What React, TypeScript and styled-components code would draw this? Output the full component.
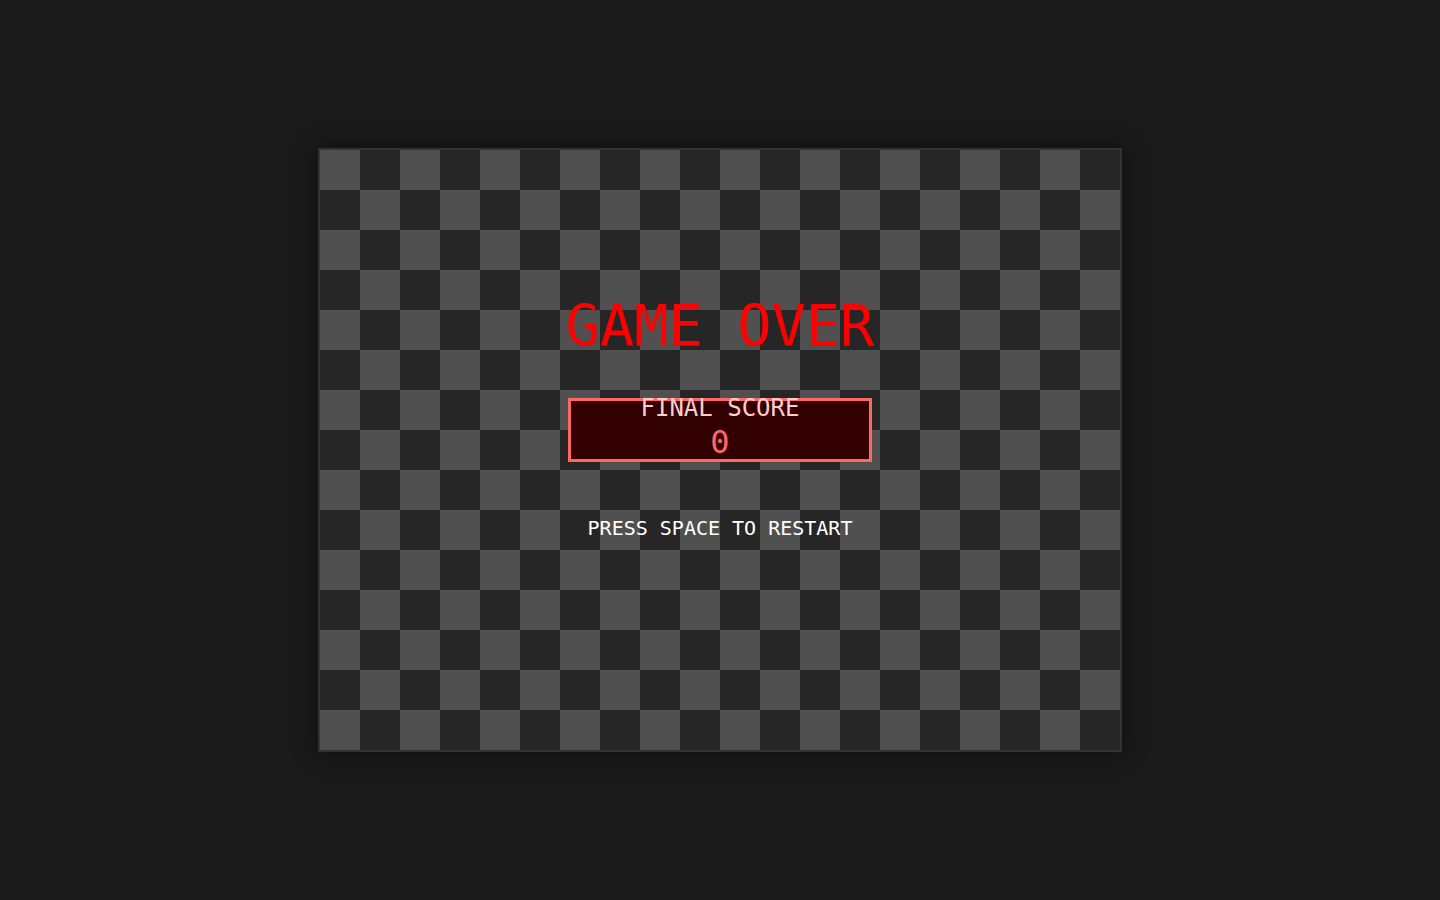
import React from 'react';
import styled, { createGlobalStyle } from 'styled-components';

const GlobalStyle = createGlobalStyle`
  html, body {
    margin: 0;
    padding: 0;
    background: #1a1a1a;
  }
  * {
    box-sizing: border-box;
  }
`;

const Page = styled.div`
  width: 100%;
  min-height: 100vh;
  display: flex;
  align-items: center;
  justify-content: center;
  font-family: 'DejaVu Sans Mono', 'Liberation Mono', monospace;
`;

const Board = styled.div`
  width: 804px;
  height: 604px;
  border: 2px solid #333333;
  box-shadow: 0 0 20px rgba(0, 0, 0, 0.5);
  background: repeating-conic-gradient(#262626 0 25%, #505050 0 50%);
  background-size: 80px 80px;
  display: flex;
  flex-direction: column;
  align-items: center;
  padding-top: 142px;
`;

const Title = styled.h1`
  margin: 0;
  font-size: 57px;
  line-height: 68px;
  font-weight: 400;
  color: #ff0000;
  white-space: pre;
`;

const ScoreBox = styled.div`
  margin-top: 38px;
  width: 304px;
  height: 64px;
  border: 3px solid #ff6666;
  background: #330000;
  display: flex;
  flex-direction: column;
  align-items: center;
`;

const ScoreLabel = styled.div`
  margin-top: -7px;
  font-size: 24px;
  line-height: 28px;
  color: #ffcccc;
`;

const ScoreValue = styled.div`
  margin-top: 2px;
  font-size: 32px;
  line-height: 37px;
  color: #ff6666;
`;

const Hint = styled.div`
  margin-top: 55px;
  font-size: 20px;
  line-height: 23px;
  color: #ffffff;
`;

const App: React.FC = () => {
  const score = 0;
  return (
    <>
      <GlobalStyle />
      <Page>
        <Board>
          <Title>GAME OVER</Title>
          <ScoreBox>
            <ScoreLabel>FINAL SCORE</ScoreLabel>
            <ScoreValue>{score}</ScoreValue>
          </ScoreBox>
          <Hint>PRESS SPACE TO RESTART</Hint>
        </Board>
      </Page>
    </>
  );
};

export default App;
